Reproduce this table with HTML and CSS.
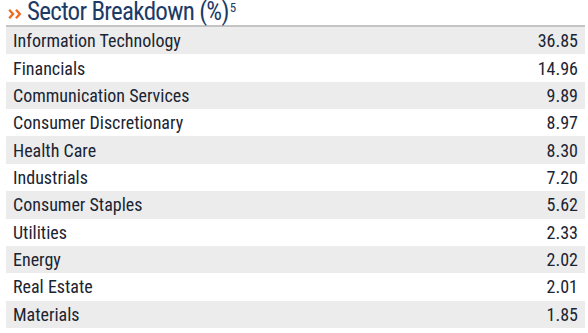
FILE: index.html
```html
<!DOCTYPE html>
<html>
<head>
<meta charset="utf-8">
<link rel="stylesheet" href="styles.css">
</head>
<body>
<div class="panel">
  <h2 class="title"><svg class="chev" width="14" height="10" viewBox="0 0 14 10"><path d="M1.2 0.8 L5 5 L1.2 9.2 M8 0.8 L11.8 5 L8 9.2" fill="none" stroke="#ef6b22" stroke-width="2.4"/></svg><span>Sector Breakdown (%)</span><sup class="note">5</sup></h2>
  <div class="table">
    <div class="row"><span>Information Technology</span><span>36.85</span></div>
    <div class="row"><span>Financials</span><span>14.96</span></div>
    <div class="row"><span>Communication Services</span><span>9.89</span></div>
    <div class="row"><span>Consumer Discretionary</span><span>8.97</span></div>
    <div class="row"><span>Health Care</span><span>8.30</span></div>
    <div class="row"><span>Industrials</span><span>7.20</span></div>
    <div class="row"><span>Consumer Staples</span><span>5.62</span></div>
    <div class="row"><span>Utilities</span><span>2.33</span></div>
    <div class="row"><span>Energy</span><span>2.02</span></div>
    <div class="row"><span>Real Estate</span><span>2.01</span></div>
    <div class="row"><span>Materials</span><span>1.85</span></div>
  </div>
</div>
</body>
</html>
```
FILE: styles.css
```css
html, body {
  margin: 0;
  padding: 0;
  background: #ffffff;
}
.panel {
  padding: 0 3px 0 6px;
  font-family: "Roboto Condensed", "Roboto", sans-serif;
  font-stretch: 75%;
}
.title {
  display: flex;
  align-items: center;
  margin: -2px 0 0 0;
  height: 27px;
  font-weight: normal;
  font-size: 25px;
  line-height: 25px;
  letter-spacing: -0.7px;
  color: #1d3b66;
  white-space: nowrap;
}
.chev {
  flex: none;
  margin: 4px 5px 0 2px;
}
.note {
  font-size: 13px;
  letter-spacing: 0;
  line-height: 1;
  align-self: flex-start;
  margin: 3px 0 0 1px;
}
.table {
  border-top: 2px solid #c4c4c4;
}
.row {
  display: flex;
  justify-content: space-between;
  align-items: center;
  height: 27.36px;
  padding: 0 7px 0 7px;
  font-size: 18px;
  letter-spacing: 0;
  color: #1a2433;
}
.row:nth-child(odd) {
  background: #ececec;
}
```
